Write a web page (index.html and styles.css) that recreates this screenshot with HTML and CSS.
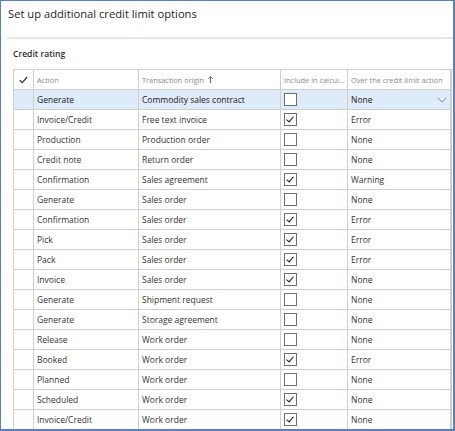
FILE: index.html
```html
<!DOCTYPE html>
<html>
<head>
<meta charset="utf-8">
<link rel="stylesheet" href="styles.css">
</head>
<body>
<div class="frame">
  <h1 class="title">Set up additional credit limit options</h1>
  <div class="sep"></div>
  <h2 class="section">Credit rating</h2>
  <table class="grid">
    <colgroup>
      <col class="c-check"><col class="c-action"><col class="c-origin"><col class="c-incl"><col class="c-over">
    </colgroup>
    <thead>
      <tr>
        <th class="chk-h"><svg width="9" height="8" viewBox="0 0 9 8"><path d="M0.8 4.2 L3.3 6.6 L8.2 1" fill="none" stroke="#333" stroke-width="1.3"/></svg></th>
        <th>Action</th>
        <th>Transaction origin <svg class="sort" width="5" height="7" viewBox="0 0 5 7"><path d="M2.5 7 V0.8 M0.4 2.8 L2.5 0.6 L4.6 2.8" fill="none" stroke="#555" stroke-width="0.9"/></svg></th>
        <th>Include in calcul...</th>
        <th>Over the credit limit action</th>
      </tr>
    </thead>
    <tbody>
      <tr class="sel"><td></td><td>Generate</td><td>Commodity sales contract</td><td><span class="cb"></span></td><td><div class="dd"><span>None</span><svg class="chev" width="10" height="6" viewBox="0 0 10 6"><path d="M0.5 0.8 L5 5 L9.5 0.8" fill="none" stroke="#8a8a8a" stroke-width="1"/></svg></div></td></tr>
      <tr><td></td><td>Invoice/Credit</td><td>Free text invoice</td><td><span class="cb on"></span></td><td>Error</td></tr>
      <tr><td></td><td>Production</td><td>Production order</td><td><span class="cb"></span></td><td>None</td></tr>
      <tr><td></td><td>Credit note</td><td>Return order</td><td><span class="cb"></span></td><td>None</td></tr>
      <tr><td></td><td>Confirmation</td><td>Sales agreement</td><td><span class="cb on"></span></td><td>Warning</td></tr>
      <tr><td></td><td>Generate</td><td>Sales order</td><td><span class="cb"></span></td><td>None</td></tr>
      <tr><td></td><td>Confirmation</td><td>Sales order</td><td><span class="cb on"></span></td><td>Error</td></tr>
      <tr><td></td><td>Pick</td><td>Sales order</td><td><span class="cb on"></span></td><td>Error</td></tr>
      <tr><td></td><td>Pack</td><td>Sales order</td><td><span class="cb on"></span></td><td>Error</td></tr>
      <tr><td></td><td>Invoice</td><td>Sales order</td><td><span class="cb on"></span></td><td>None</td></tr>
      <tr><td></td><td>Generate</td><td>Shipment request</td><td><span class="cb"></span></td><td>None</td></tr>
      <tr><td></td><td>Generate</td><td>Storage agreement</td><td><span class="cb"></span></td><td>None</td></tr>
      <tr><td></td><td>Release</td><td>Work order</td><td><span class="cb"></span></td><td>None</td></tr>
      <tr><td></td><td>Booked</td><td>Work order</td><td><span class="cb on"></span></td><td>Error</td></tr>
      <tr><td></td><td>Planned</td><td>Work order</td><td><span class="cb"></span></td><td>None</td></tr>
      <tr><td></td><td>Scheduled</td><td>Work order</td><td><span class="cb on"></span></td><td>None</td></tr>
      <tr><td></td><td>Invoice/Credit</td><td>Work order</td><td><span class="cb on"></span></td><td>None</td></tr>
    </tbody>
  </table>
</div>
</body>
</html>
```

FILE: styles.css
```css
html, body {
  margin: 0;
  padding: 0;
  background: #ffffff;
}
.frame {
  box-sizing: border-box;
  width: 455px;
  height: 431px;
  overflow: hidden;
  border-style: solid;
  border-color: #5a7fc6;
  border-width: 1px 2px 2px 1px;
  font-family: "Open Sans", "Noto Sans", sans-serif;
  color: #333;
  background: #fff;
}
.title {
  margin: 0;
  padding: 4px 0 0 7px;
  height: 30px;
  box-sizing: border-box;
  font-size: 11.2px;
  font-weight: 400;
  color: #1e1e1e;
  line-height: 18px;
}
.sep {
  margin: 6px 0 0 6px;
  height: 2px;
  background: #e6e6e6;
}
.section {
  margin: 0;
  padding: 0 0 0 12px;
  height: 30px;
  line-height: 30px;
  font-size: 8.6px;
  font-weight: 600;
  color: #2b2b2b;
}
.grid {
  margin-left: 12px;
  width: 439px;
  border-collapse: collapse;
  table-layout: fixed;
  border-top: 1px solid #cfcfcf;
  border-left: 1px solid #cfcfcf;
  border-right: 2px solid #cdcdcd;
}
.c-check { width: 20px; }
.c-action { width: 105px; }
.c-origin { width: 142px; }
.c-incl { width: 67px; }
.c-over { width: auto; }
.grid th, .grid td {
  box-sizing: border-box;
  height: 20px;
  padding: 0 0 0 3px;
  border-right: 1px solid #cfcfcf;
  border-bottom: 1px solid #cfcfcf;
  text-align: left;
  white-space: nowrap;
  overflow: hidden;
  vertical-align: middle;
}
.grid th {
  font-size: 7.4px;
  font-weight: 400;
  color: #8a8a8a;
}
.grid th.chk-h {
  padding: 0 0 0 5px;
}
.chk-h svg { display: block; }
.sort {
  margin-left: 2px;
  vertical-align: -0.5px;
}
.grid td {
  font-size: 8.5px;
  color: #333;
}
.grid tr.sel td {
  background: #deebf8;
  color: #1a1a1a;
}
.dd {
  display: flex;
  align-items: center;
  justify-content: space-between;
  padding-right: 3px;
}
.chev { display: block; }
.cb {
  display: block;
  box-sizing: border-box;
  width: 13px;
  height: 13px;
  border: 1.5px solid #6e6e6e;
  background: #fff;
  position: relative;
}
.cb.on::after {
  content: "";
  position: absolute;
  left: 3px;
  top: 1px;
  width: 3px;
  height: 6px;
  border-right: 1.7px solid #111;
  border-bottom: 1.7px solid #111;
  transform: rotate(40deg);
}
```
